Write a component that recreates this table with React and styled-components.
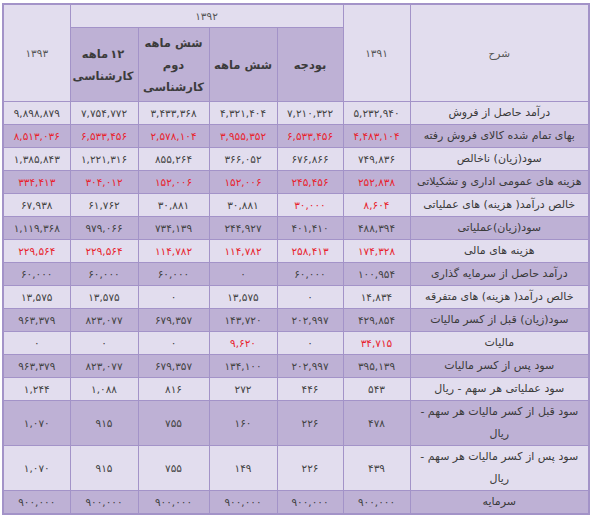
import React from "react";
import styled, { createGlobalStyle } from "styled-components";

const Global = createGlobalStyle`
  html, body { margin: 0; padding: 0; background: #ffffff; }
  body { font-family: "DejaVu Sans", "Liberation Sans", sans-serif; }
`;

const Page = styled.div`
  padding: 3px 0 0 2px;
`;

const Table = styled.table`
  direction: rtl;
  border-collapse: collapse;
  table-layout: fixed;
  width: 587px;
  border: 2px solid #a393c8;
  font-family: "DejaVu Sans", sans-serif;
  font-size: 10.5px;
`;

const Col = styled.col`
  width: ${(p) => p.$w}px;
`;

const HeadCell = styled.th`
  border: 1px solid #a393c8;
  background: ${(p) => (p.$dark ? "#beb1d5" : "#e2ddee")};
  color: ${(p) => (p.$dark ? "#3c3c3c" : "#555555")};
  font-weight: ${(p) => (p.$dark ? "bold" : "normal")};
  font-size: ${(p) => (p.$dark ? "11.5px" : "10.5px")};
  line-height: ${(p) => (p.$dark ? 22 : 20)}px;
  text-align: center;
  vertical-align: middle;
  padding: 1px 4px;
  height: ${(p) => p.$h || 20}px;
`;

const Num = styled.span`
  display: inline-block;
  margin: 0 2px;
`;

const Row = styled.tr`
  background: ${(p) => (p.$dark ? "#beb1d5" : "#e2ddee")};
`;

const Cell = styled.td`
  border: 1px solid #a393c8;
  color: ${(p) => (p.$red ? "#e8232d" : "#434343")};
  text-align: center;
  vertical-align: middle;
  line-height: 22px;
  padding: 0 3px;
  height: 22px;
`;

const Title = styled(Cell)`
  font-size: 11px;
  color: #3a3a3a;
  padding: 0 6px;
`;

const fa = (v) => String(v).replace(/[0-9]/g, (d) => "۰۱۲۳۴۵۶۷۸۹"[d]);

// values: [1391, budget, six-month, second-six, 12-month, 1393]
const rows = [
  { t: "درآمد حاصل از فروش", v: ["5,232,940", "7,210,322", "4,321,404", "3,433,368", "7,754,772", "9,898,879"] },
  { t: "بهای تمام شده کالای فروش رفته", red: [1, 1, 1, 1, 1, 1], v: ["4,483,104", "6,533,456", "3,955,352", "2,578,104", "6,533,456", "8,513,036"] },
  { t: "سود(زیان) ناخالص", v: ["749,836", "676,866", "366,052", "855,264", "1,221,316", "1,385,843"] },
  { t: "هزینه های عمومی اداری و تشکیلاتی", red: [1, 1, 1, 1, 1, 1], v: ["252,838", "245,456", "152,006", "152,006", "304,012", "334,413"] },
  { t: "خالص درآمد( هزینه) های عملیاتی", red: [1, 1, 0, 0, 0, 0], v: ["8,604", "30,000", "30,881", "30,881", "61,762", "67,938"] },
  { t: "سود(زیان)عملیاتی", v: ["488,394", "401,410", "244,927", "734,139", "979,066", "1,119,368"] },
  { t: "هزینه های مالی", red: [1, 1, 1, 1, 1, 1], v: ["174,328", "258,413", "114,782", "114,782", "229,564", "229,564"] },
  { t: "درآمد حاصل از سرمایه گذاری", v: ["100,954", "60,000", "0", "60,000", "60,000", "60,000"] },
  { t: "خالص درآمد( هزینه) های متفرقه", v: ["14,834", "0", "13,575", "0", "13,575", "13,575"] },
  { t: "سود(زیان) قبل از کسر مالیات", v: ["429,854", "202,997", "143,720", "679,357", "823,077", "963,379"] },
  { t: "مالیات", red: [1, 0, 1, 0, 0, 0], v: ["34,715", "0", "9,620", "0", "0", "0"] },
  { t: "سود پس از کسر مالیات", v: ["395,139", "202,997", "134,100", "679,357", "823,077", "963,379"] },
  { t: "سود عملیاتی هر سهم - ریال", v: ["543", "446", "272", "816", "1,088", "1,244"] },
  { t: "سود قبل از کسر مالیات هر سهم - ریال", v: ["478", "226", "160", "755", "915", "1,070"] },
  { t: "سود پس از کسر مالیات هر سهم - ریال", v: ["439", "226", "149", "755", "915", "1,070"] },
  { t: "سرمایه", v: ["900,000", "900,000", "900,000", "900,000", "900,000", "900,000"] },
];

const widths = [179, 67, 66, 68, 71, 68, 67];

export default function App() {
  return (
    <Page>
      <Global />
      <Table>
        <colgroup>
          {widths.map((w, i) => (
            <Col key={i} $w={w} />
          ))}
        </colgroup>
        <thead>
          <tr>
            <HeadCell rowSpan={2}>شرح</HeadCell>
            <HeadCell rowSpan={2}>{fa("1391")}</HeadCell>
            <HeadCell colSpan={4} $h={20}>{fa("1392")}</HeadCell>
            <HeadCell rowSpan={2}>{fa("1393")}</HeadCell>
          </tr>
          <tr>
            <HeadCell $dark $h={71}>بودجه</HeadCell>
            <HeadCell $dark>شش ماهه</HeadCell>
            <HeadCell $dark>شش ماهه دوم کارشناسی</HeadCell>
            <HeadCell $dark>
              <Num>{fa("12")}</Num>ماهه کارشناسی
            </HeadCell>
          </tr>
        </thead>
        <tbody>
          {rows.map((r, i) => (
            <Row key={i} $dark={i % 2 === 1}>
              <Title>{r.t}</Title>
              {r.v.map((v, j) => (
                <Cell key={j} $red={r.red && r.red[j]}>
                  {fa(v)}
                </Cell>
              ))}
            </Row>
          ))}
        </tbody>
      </Table>
    </Page>
  );
}
